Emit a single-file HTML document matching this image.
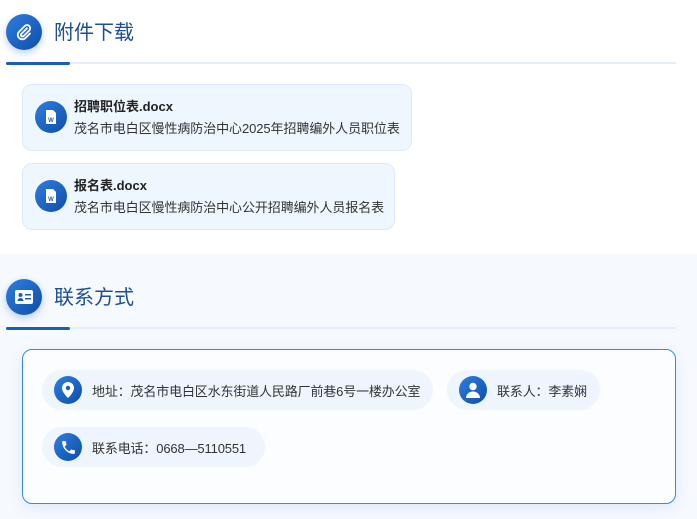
<!DOCTYPE html>
<html><head><meta charset="utf-8"><style>
*{margin:0;padding:0;box-sizing:border-box}
body{width:697px;height:519px;overflow:hidden;background:#fff;font-family:"Liberation Sans","Noto Sans CJK SC",sans-serif;position:relative}
.abs{position:absolute}
.hic{width:36px;height:36px;border-radius:50%;background:linear-gradient(135deg,#2f7de0,#0d4fa8);box-shadow:0 3px 8px rgba(30,100,200,.3);display:flex;align-items:center;justify-content:center}
.ht{font-size:20px;color:#1e4f8f;line-height:24px}
.line{height:2px;background:#e3eefa}
.line i{display:block;width:64px;height:3px;background:#1a5fb4;border-radius:2px;margin-top:-0.5px}
.card{background:#eef6fe;border:1px solid #dbeafb;border-radius:10px;height:67px}
.cic{width:32px;height:32px;border-radius:50%;background:linear-gradient(135deg,#2f7de0,#0d4fa8);display:flex;align-items:center;justify-content:center}
.ct{font-size:13px;font-weight:bold;color:#222;line-height:16px}
.cs{font-size:13px;color:#333;line-height:16px;letter-spacing:-0.08px}
.pill{background:#eff5fd;border-radius:20px;height:40px;display:flex;align-items:center;padding-left:12px;font-size:13px;color:#333;letter-spacing:-0.15px}
.pic{width:28px;height:28px;border-radius:50%;background:linear-gradient(135deg,#2f7de0,#0d4fa8);display:flex;align-items:center;justify-content:center;margin-right:10px}
</style></head><body>
<div class="abs" style="left:0;top:254px;width:697px;height:265px;background:#f6f9fe"></div>

<div class="abs hic" style="left:6px;top:14px"><svg width="18" height="18" viewBox="0 0 24 24" fill="none" stroke="#fff" stroke-width="2.4" stroke-linecap="round"><path d="M16 7l-7.5 7.5a2 2 0 0 0 3 3L19 10a4 4 0 0 0-6-6l-7.5 7.5a6 6 0 0 0 8.5 8.5L20 14"/></svg></div>
<div class="abs ht" style="left:54px;top:21px">附件下载</div>
<div class="abs line" style="left:6px;top:62px;width:670px"><i></i></div>

<div class="abs card" style="left:22px;top:84px;width:390px"></div>
<div class="abs cic" style="left:35px;top:101px"><svg width="14" height="16" viewBox="0 0 14 16"><path d="M2 1h7l3 3v11H2z" fill="#fff"/><text x="7" y="13" font-size="6" font-weight="bold" fill="#1a5fb4" text-anchor="middle" font-family="Liberation Sans">W</text></svg></div>
<div class="abs ct" style="left:74px;top:99px">招聘职位表.docx</div>
<div class="abs cs" style="left:74px;top:121px">茂名市电白区慢性病防治中心2025年招聘编外人员职位表</div>

<div class="abs card" style="left:22px;top:163px;width:373px"></div>
<div class="abs cic" style="left:35px;top:180px"><svg width="14" height="16" viewBox="0 0 14 16"><path d="M2 1h7l3 3v11H2z" fill="#fff"/><text x="7" y="13" font-size="6" font-weight="bold" fill="#1a5fb4" text-anchor="middle" font-family="Liberation Sans">W</text></svg></div>
<div class="abs ct" style="left:74px;top:178px">报名表.docx</div>
<div class="abs cs" style="left:74px;top:200px">茂名市电白区慢性病防治中心公开招聘编外人员报名表</div>

<div class="abs hic" style="left:6px;top:279px"><svg width="18" height="14" viewBox="0 0 18 14"><rect x="0" y="0" width="18" height="14" rx="2" fill="#fff"/><circle cx="5.5" cy="5" r="2" fill="#1a5fb4"/><path d="M2.5 11a3 3 0 0 1 6 0z" fill="#1a5fb4"/><rect x="10" y="4" width="6" height="1.5" fill="#1a5fb4"/><rect x="10" y="8" width="6" height="1.5" fill="#1a5fb4"/></svg></div>
<div class="abs ht" style="left:54px;top:286px">联系方式</div>
<div class="abs line" style="left:6px;top:327px;width:670px"><i></i></div>

<div class="abs" style="left:22px;top:349px;width:654px;height:155px;border:1px solid #3a8ad8;border-radius:10px;background:#fbfdff;box-shadow:0 4px 14px rgba(60,130,220,.12)"></div>
<div class="abs pill" style="left:42px;top:370px;width:391px"><div class="pic"><svg width="12" height="16" viewBox="0 0 12 16"><path d="M6 0a6 6 0 0 0-6 6c0 4.5 6 10 6 10s6-5.5 6-10a6 6 0 0 0-6-6z" fill="#fff"/><circle cx="6" cy="6" r="2.2" fill="#1a5fb4"/></svg></div>地址：茂名市电白区水东街道人民路厂前巷6号一楼办公室</div>
<div class="abs pill" style="left:447px;top:370px;width:153px"><div class="pic"><svg width="14" height="16" viewBox="0 0 14 16"><circle cx="7" cy="4.5" r="3.7" fill="#fff"/><path d="M0 16a7 6.5 0 0 1 14 0z" fill="#fff"/></svg></div>联系人：李素娴</div>
<div class="abs pill" style="left:42px;top:427px;width:223px"><div class="pic"><svg width="17" height="17" viewBox="0 0 24 24"><path d="M6.6 10.8a15 15 0 0 0 6.6 6.6l2.2-2.2a1 1 0 0 1 1-.25 11 11 0 0 0 3.6.6 1 1 0 0 1 1 1V20a1 1 0 0 1-1 1A17 17 0 0 1 3 4a1 1 0 0 1 1-1h3.5a1 1 0 0 1 1 1 11 11 0 0 0 .6 3.6 1 1 0 0 1-.25 1z" fill="#fff"/></svg></div>联系电话：0668—5110551</div>
</body></html>
